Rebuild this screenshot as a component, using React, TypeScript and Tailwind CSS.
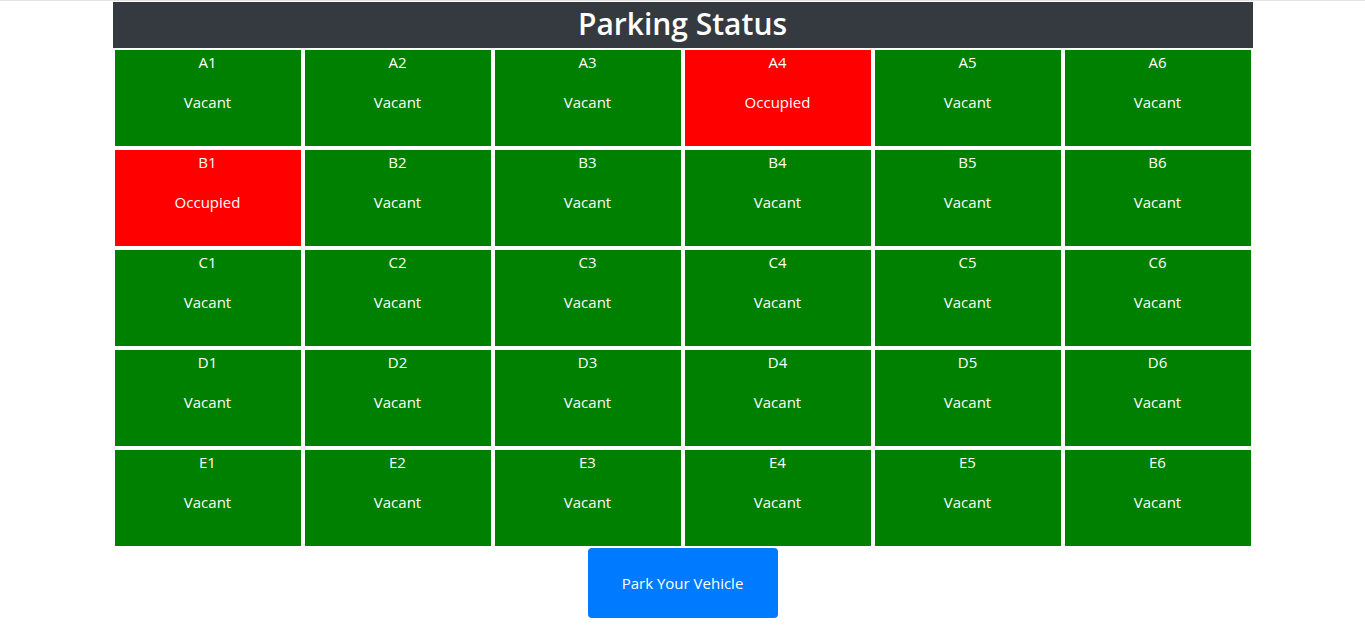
import React from "react";

const rows = ["A", "B", "C", "D", "E"];
const occupied = new Set(["A4", "B1"]);

export default function App() {
  return (
    <div className="min-h-screen bg-white text-white" style={{ fontFamily: '"Open Sans", "Noto Sans", sans-serif' }}>
      <div className="h-px bg-[#e3e3e3]" />
      <div className="w-[1140px] mx-auto pt-px">
        <div className="h-[46px] bg-[#343a40] flex items-center justify-center">
          <h1 className="text-[30px] font-semibold leading-none text-white -mt-[3px]">Parking Status</h1>
        </div>
        <div className="grid grid-cols-6">
          {rows.flatMap((r) =>
            [1, 2, 3, 4, 5, 6].map((n) => {
              const id = `${r}${n}`;
              const occ = occupied.has(id);
              return (
                <div
                  key={id}
                  className={`m-[2px] h-[96px] flex flex-col items-center text-[15px] leading-6 ${occ ? "bg-[#ff0000]" : "bg-[#008000]"}`}
                >
                  <div>{id}</div>
                  <div className="mt-4">{occ ? "Occupied" : "Vacant"}</div>
                </div>
              );
            })
          )}
        </div>
        <div className="flex justify-center">
          <button className="w-[190px] h-[70px] rounded bg-[#007bff] text-white text-[15px]">Park Your Vehicle</button>
        </div>
      </div>
    </div>
  );
}
